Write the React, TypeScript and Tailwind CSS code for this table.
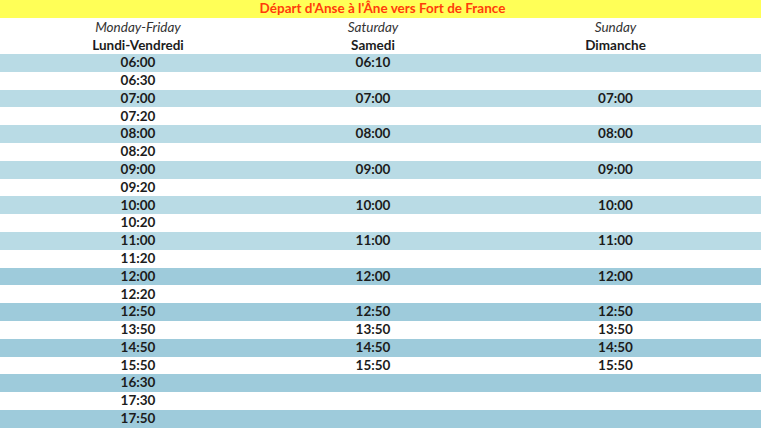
import React from "react";

const rows: [string, string, string][] = [
  ["06:00", "06:10", ""],
  ["06:30", "", ""],
  ["07:00", "07:00", "07:00"],
  ["07:20", "", ""],
  ["08:00", "08:00", "08:00"],
  ["08:20", "", ""],
  ["09:00", "09:00", "09:00"],
  ["09:20", "", ""],
  ["10:00", "10:00", "10:00"],
  ["10:20", "", ""],
  ["11:00", "11:00", "11:00"],
  ["11:20", "", ""],
  ["12:00", "12:00", "12:00"],
  ["12:20", "", ""],
  ["12:50", "12:50", "12:50"],
  ["13:50", "13:50", "13:50"],
  ["14:50", "14:50", "14:50"],
  ["15:50", "15:50", "15:50"],
  ["16:30", "", ""],
  ["17:30", "", ""],
  ["17:50", "", ""],
];

export default function App() {
  return (
    <div
      className="w-[761px] h-[428px] overflow-hidden bg-white text-[#1c1c1c]"
      style={{ fontFamily: "Lato, 'Open Sans', sans-serif" }}
    >
      <div className="h-[18px] bg-[#ffff57] flex items-center justify-center">
        <span className="text-[#ff3c0a] font-bold text-[13.5px] leading-none pl-[4px]">
          Départ d'Anse à l'Âne vers Fort de France
        </span>
      </div>
      <div className="grid grid-cols-[276px_194px_1fr] h-[36px] text-[13.5px] leading-[18px]">
        {[
          ["Monday-Friday", "Lundi-Vendredi"],
          ["Saturday", "Samedi"],
          ["Sunday", "Dimanche"],
        ].map(([en, fr]) => (
          <div key={en} className="flex flex-col items-center">
            <span className="italic text-[#333] h-[18px]">{en}</span>
            <span className="font-bold h-[18px]">{fr}</span>
          </div>
        ))}
      </div>
      {rows.map((r, i) => {
        const blue = i % 2 === 0;
        const bg = !blue ? "bg-white" : i >= 12 ? "bg-[#9ecbdb]" : "bg-[#b9dbe5]";
        return (
          <div
            key={i}
            className={`grid grid-cols-[276px_194px_1fr] h-[17.8px] items-center font-bold text-[13.5px] leading-none ${bg}`}
          >
            <span className="text-center">{r[0]}</span>
            <span className="text-center">{r[1]}</span>
            <span className="text-center">{r[2]}</span>
          </div>
        );
      })}
    </div>
  );
}
